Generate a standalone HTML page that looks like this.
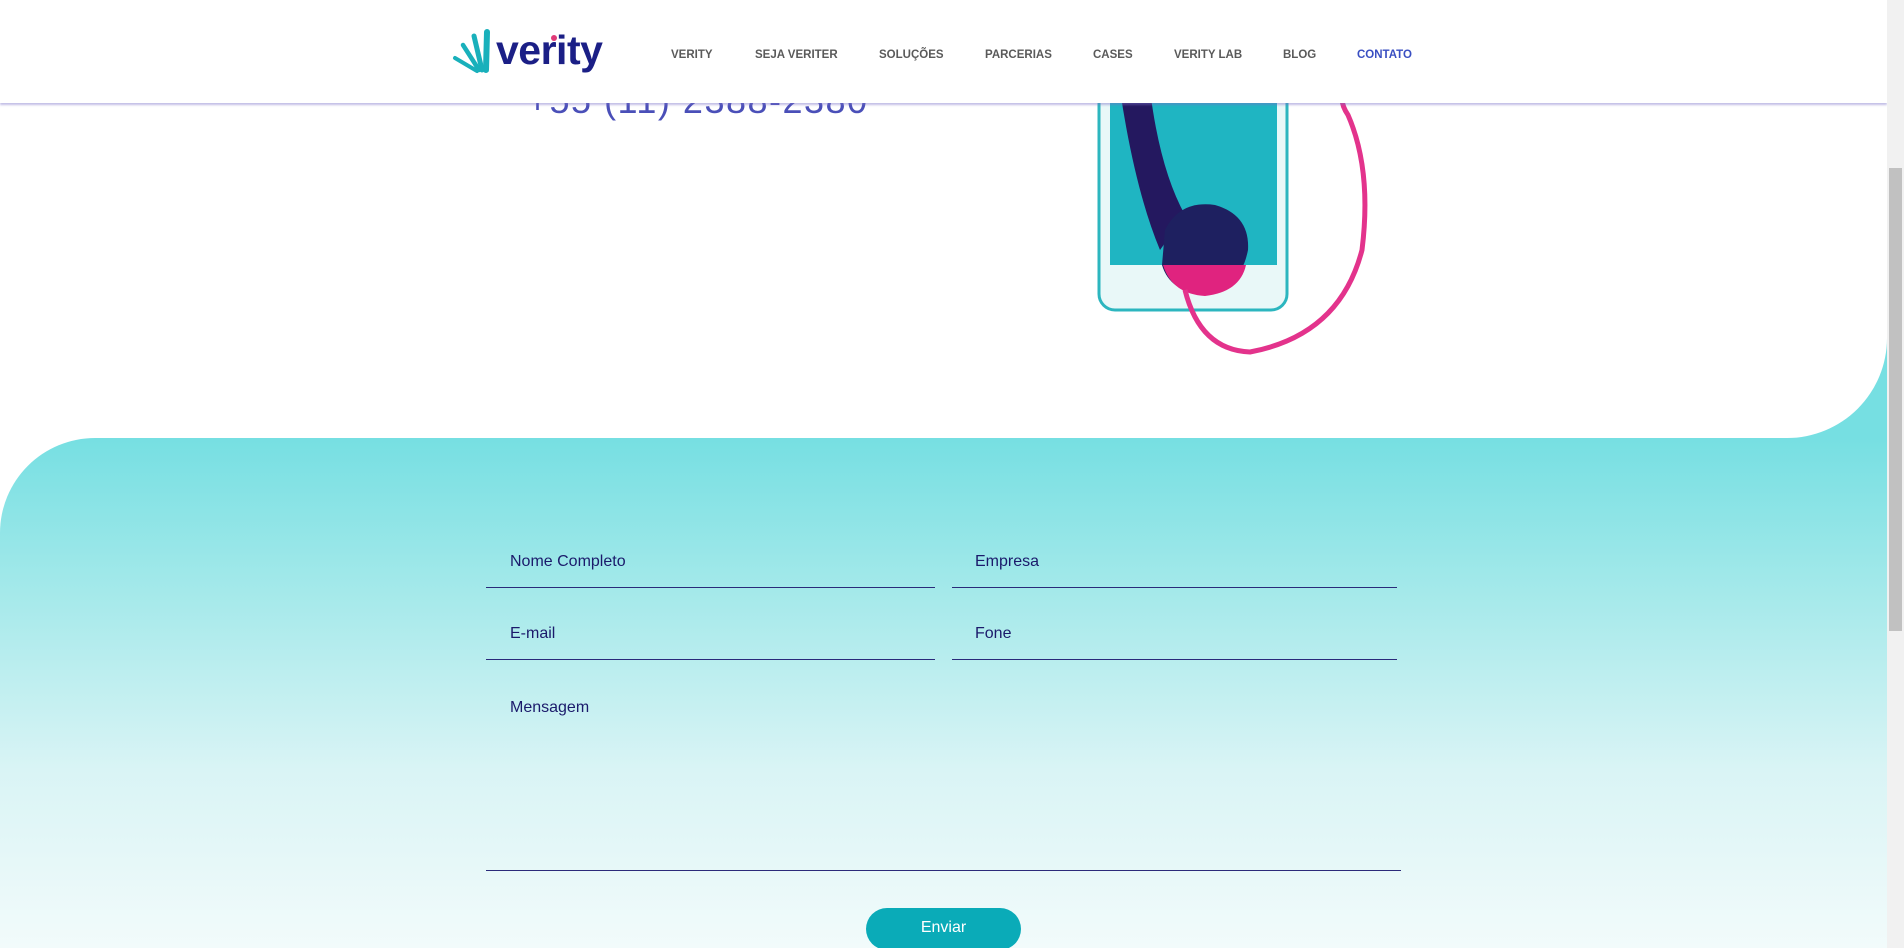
<!DOCTYPE html>
<html><head><meta charset="utf-8"><style>
*{margin:0;padding:0;box-sizing:border-box}
html,body{width:1904px;height:948px;overflow:hidden;font-family:"Liberation Sans",sans-serif}
body{position:relative;background:#fff}
#page{position:absolute;left:0;top:0;width:1887px;height:948px;background:#fff;overflow:hidden}
#corner{position:absolute;left:1780px;top:330px;width:107px;height:120px;background:#76dfe2}
#white{position:absolute;left:0;top:0;width:1887px;height:438px;background:#fff;border-bottom-right-radius:100px}
#teal{position:absolute;left:0;top:438px;width:1887px;height:510px;border-top-left-radius:95px;background:linear-gradient(#76dfe2 0%,#a4e9ea 30%,#d9f4f5 65%,#f2fbfb 100%)}
#sb{position:absolute;left:1887px;top:0;width:17px;height:948px;background:#f1f1f1}
#sb div{position:absolute;left:2px;top:168px;width:13px;height:463px;background:#c1c1c1}
#hdr{position:absolute;left:0;top:0;width:1887px;height:103px;background:#fff;box-shadow:0 2px 2px rgba(120,110,200,.45)}
.nav{position:absolute;top:49px;font-size:11.5px;font-weight:bold;color:#5a5a5a}
.phone{position:absolute;left:527px;top:80px;font-size:36px;color:#4a4fb8;letter-spacing:1.5px;white-space:nowrap}
.lbl{position:absolute;font-size:16px;color:#1b1a6b}
.ln{position:absolute;height:1px;background:#2a2a7a}
#btn{position:absolute;left:866px;top:908px;width:155px;height:42px;border-radius:21px;background:#0aabb8;color:#fff;font-size:16px;text-align:center;line-height:40px}
</style></head><body>
<div id="page">
<div id="corner"></div>
<div id="white"></div>
<div id="teal"></div>
<div class="phone">+55 (11) 2388-2380</div>
<svg style="position:absolute;left:0;top:0" width="1887" height="440">
<rect x="1099" y="40" width="188" height="270" rx="16" fill="#e9f8f8" stroke="#2cb6bf" stroke-width="3"/>
<rect x="1110" y="40" width="167" height="225" fill="#1fb5c2"/>
<path d="M1120 90 L1150 90 Q1160 170 1185 215 L1160 250 Q1135 190 1120 90Z" fill="#24185f"/>
<path d="M1165 230 Q1180 200 1215 205 Q1250 215 1248 250 Q1240 290 1205 295 Q1170 292 1162 265Z" fill="#1e2060"/>
<path d="M1163 265 L1246 265 Q1240 292 1205 296 Q1172 294 1163 265Z" fill="#e0237f"/>
<path d="M1185 290 Q1200 350 1250 352 Q1340 335 1362 250 Q1372 170 1348 115 Q1338 100 1345 90" fill="none" stroke="#e3338c" stroke-width="5"/>
</svg>
<div class="lbl" style="left:510px;top:553px">Nome Completo</div>
<div class="lbl" style="left:975px;top:553px">Empresa</div>
<div class="ln" style="left:486px;top:587px;width:449px"></div>
<div class="ln" style="left:952px;top:587px;width:445px"></div>
<div class="lbl" style="left:510px;top:625px">E-mail</div>
<div class="lbl" style="left:975px;top:625px">Fone</div>
<div class="ln" style="left:486px;top:659px;width:449px"></div>
<div class="ln" style="left:952px;top:659px;width:445px"></div>
<div class="lbl" style="left:510px;top:699px">Mensagem</div>
<div class="ln" style="left:486px;top:870px;width:915px"></div>
<div id="btn">Enviar</div>
<div id="hdr">
<svg style="position:absolute;left:452px;top:28px" width="40" height="46" viewBox="0 0 40 46">
<g stroke="#19b0bb" stroke-linecap="round" fill="none">
<path d="M35 4 L34 42" stroke-width="6"/>
<path d="M22 8 L30 42" stroke-width="5"/>
<path d="M11 17 L27 42" stroke-width="4.5"/>
<path d="M3 30 L25 43" stroke-width="4"/>
</g></svg>
<div style="position:absolute;left:496px;top:27px;font-size:41px;font-weight:bold;color:#1b1f86;letter-spacing:-0.5px">verity</div>
<div style="position:absolute;left:551px;top:35px;width:6px;height:6px;border-radius:50%;background:#e03a78"></div>
<div class="nav" style="left:671px">VERITY</div>
<div class="nav" style="left:755px">SEJA VERITER</div>
<div class="nav" style="left:879px">SOLUÇÕES</div>
<div class="nav" style="left:985px">PARCERIAS</div>
<div class="nav" style="left:1093px">CASES</div>
<div class="nav" style="left:1174px">VERITY LAB</div>
<div class="nav" style="left:1283px">BLOG</div>
<div class="nav" style="left:1357px;color:#3a4fc2">CONTATO</div>
</div>
</div>
<div id="sb"><div></div></div>
</body></html>
